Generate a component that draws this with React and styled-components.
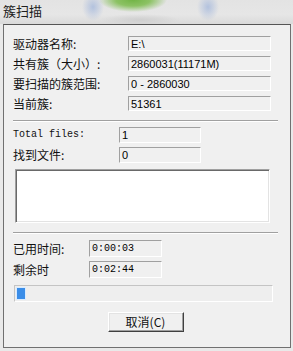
import React from "react";
import styled, { createGlobalStyle } from "styled-components";

const GlobalStyle = createGlobalStyle`
  html, body {
    margin: 0;
    padding: 0;
    background: #e9e9e9;
  }
  body {
    font-family: "Noto Sans CJK SC", "Liberation Sans", sans-serif;
  }
`;

const StyledWindow = styled.div`
  width: 293px;
  height: 351px;
  overflow: hidden;
  background: #e9e9e9;
`;

const StyledTitleBar = styled.div`
  height: 24px;
  box-sizing: border-box;
  padding: 2px 0 0 3px;
  background:
    radial-gradient(ellipse 34px 12px at 133px 0px, #72b446 0%, #8cc264 50%, rgba(215,225,210,0) 100%),
    radial-gradient(ellipse 11px 14px at 93px 7px, #b3c2de 0%, rgba(220,224,232,0) 100%),
    radial-gradient(ellipse 11px 14px at 208px 7px, #b3c2de 0%, rgba(220,224,232,0) 100%),
    radial-gradient(ellipse 40px 6px at 140px 20px, #cfcfcf 0%, rgba(220,220,220,0) 100%),
    linear-gradient(to bottom, #e3e3e3 0%, #e6e6e6 60%, #dadada 100%);
  color: #202020;
  font-size: 13px;
  line-height: 17px;
  font-family: "Noto Sans CJK SC", sans-serif;
`;

const StyledFrame = styled.div`
  display: flex;
  flex-direction: column;
  margin-left: 3px;
  width: 288px;
  height: 324px;
  box-sizing: border-box;
  padding: 11px 12px 0 9px;
  border: 1px solid #707070;
  border-top-color: #555555;
  background: #f0f0f0;
`;

const StyledSection = styled.div`
  display: flex;
  flex-direction: column;
  gap: ${props => props.gap}px;
`;

const StyledRow = styled.div`
  display: flex;
  align-items: center;
  height: ${props => props.h}px;
`;

const StyledLabel = styled.span`
  width: ${props => props.w}px;
  flex: none;
  font-size: ${props => (props.mono ? "10px" : "12px")};
  font-family: ${props =>
    props.mono
      ? '"Liberation Mono", monospace'
      : '"Noto Sans CJK SC", sans-serif'};
  color: #111;
  white-space: nowrap;
  line-height: 14px;
`;

const StyledField = styled.div`
  width: ${props => props.w}px;
  height: 100%;
  box-sizing: border-box;
  padding-left: 2px;
  display: flex;
  align-items: center;
  border: 1px solid;
  border-color: #a0a0a0 #ffffff #ffffff #a0a0a0;
  background: #f0f0f0;
  font-size: ${props => (props.mono ? "10px" : "11px")};
  font-family: ${props =>
    props.mono ? '"Liberation Mono", monospace' : '"Liberation Sans", sans-serif'};
  color: #000;
  white-space: nowrap;
`;

const StyledSeparator = styled.div`
  height: 2px;
  flex: none;
  margin-top: ${props => props.top}px;
  margin-bottom: ${props => props.bottom}px;
  border-top: 1px solid #a0a0a0;
  background: #ffffff;
  box-sizing: border-box;
`;

const StyledListBox = styled.div`
  margin: 6px 0 0 2px;
  width: 255px;
  height: 54px;
  box-sizing: border-box;
  background: #ffffff;
  border: 1px solid;
  border-color: #a0a0a0 #ffffff #ffffff #a0a0a0;
  box-shadow: inset 1px 1px 0 #696969, inset -1px -1px 0 #e3e3e3;
`;

const StyledProgress = styled.div`
  margin: 7px 0 0 1px;
  width: 259px;
  height: 17px;
  box-sizing: border-box;
  padding: 2px;
  border: 1px solid;
  border-color: #c4c4c4 #ffffff #ffffff #c4c4c4;
  background: #eeeeee;
  display: flex;
`;

const StyledChunk = styled.div`
  width: ${props => props.w}px;
  height: 100%;
  background: #3a8de8;
  box-shadow: 0 0 0 1px #d8ebff;
`;

const StyledButton = styled.button`
  align-self: center;
  margin-top: 10px;
  width: 76px;
  height: 20px;
  box-sizing: border-box;
  padding: 0;
  border: 1px solid;
  border-color: #ffffff #404040 #404040 #ffffff;
  box-shadow: inset -1px -1px 0 #a0a0a0, inset 1px 1px 0 #e3e3e3;
  background: #f0f0f0;
  font-size: 12px;
  font-family: "Noto Sans CJK SC", sans-serif;
  color: #111;
  line-height: 16px;
`;

const driveRows = [
  ["驱动器名称:", "E:\\"],
  ["共有簇（大小）:", "2860031(11171M)"],
  ["要扫描的簇范围:", "0 - 2860030"],
  ["当前簇:", "51361"],
];

const App = () => {
  return (
    <StyledWindow>
      <GlobalStyle />
      <StyledTitleBar>簇扫描</StyledTitleBar>
      <StyledFrame>
        <StyledSection gap={5}>
          {driveRows.map(([label, value]) => (
            <StyledRow h={15} key={label}>
              <StyledLabel w={115}>{label}</StyledLabel>
              <StyledField w={143}>{value}</StyledField>
            </StyledRow>
          ))}
        </StyledSection>
        <StyledSeparator top={9} bottom={5} />
        <StyledSection gap={4}>
          <StyledRow h={16}>
            <StyledLabel w={106} mono>Total files:</StyledLabel>
            <StyledField w={82}>1</StyledField>
          </StyledRow>
          <StyledRow h={16}>
            <StyledLabel w={106}>找到文件:</StyledLabel>
            <StyledField w={82}>0</StyledField>
          </StyledRow>
        </StyledSection>
        <StyledListBox />
        <StyledSeparator top={9} bottom={6} />
        <StyledSection gap={4}>
          <StyledRow h={17}>
            <StyledLabel w={76}>已用时间:</StyledLabel>
            <StyledField w={73} mono>0:00:03</StyledField>
          </StyledRow>
          <StyledRow h={17}>
            <StyledLabel w={76}>剩余时</StyledLabel>
            <StyledField w={73} mono>0:02:44</StyledField>
          </StyledRow>
        </StyledSection>
        <StyledProgress>
          <StyledChunk w={8} />
        </StyledProgress>
        <StyledButton>取消(C)</StyledButton>
      </StyledFrame>
    </StyledWindow>
  );
};

export default App;
